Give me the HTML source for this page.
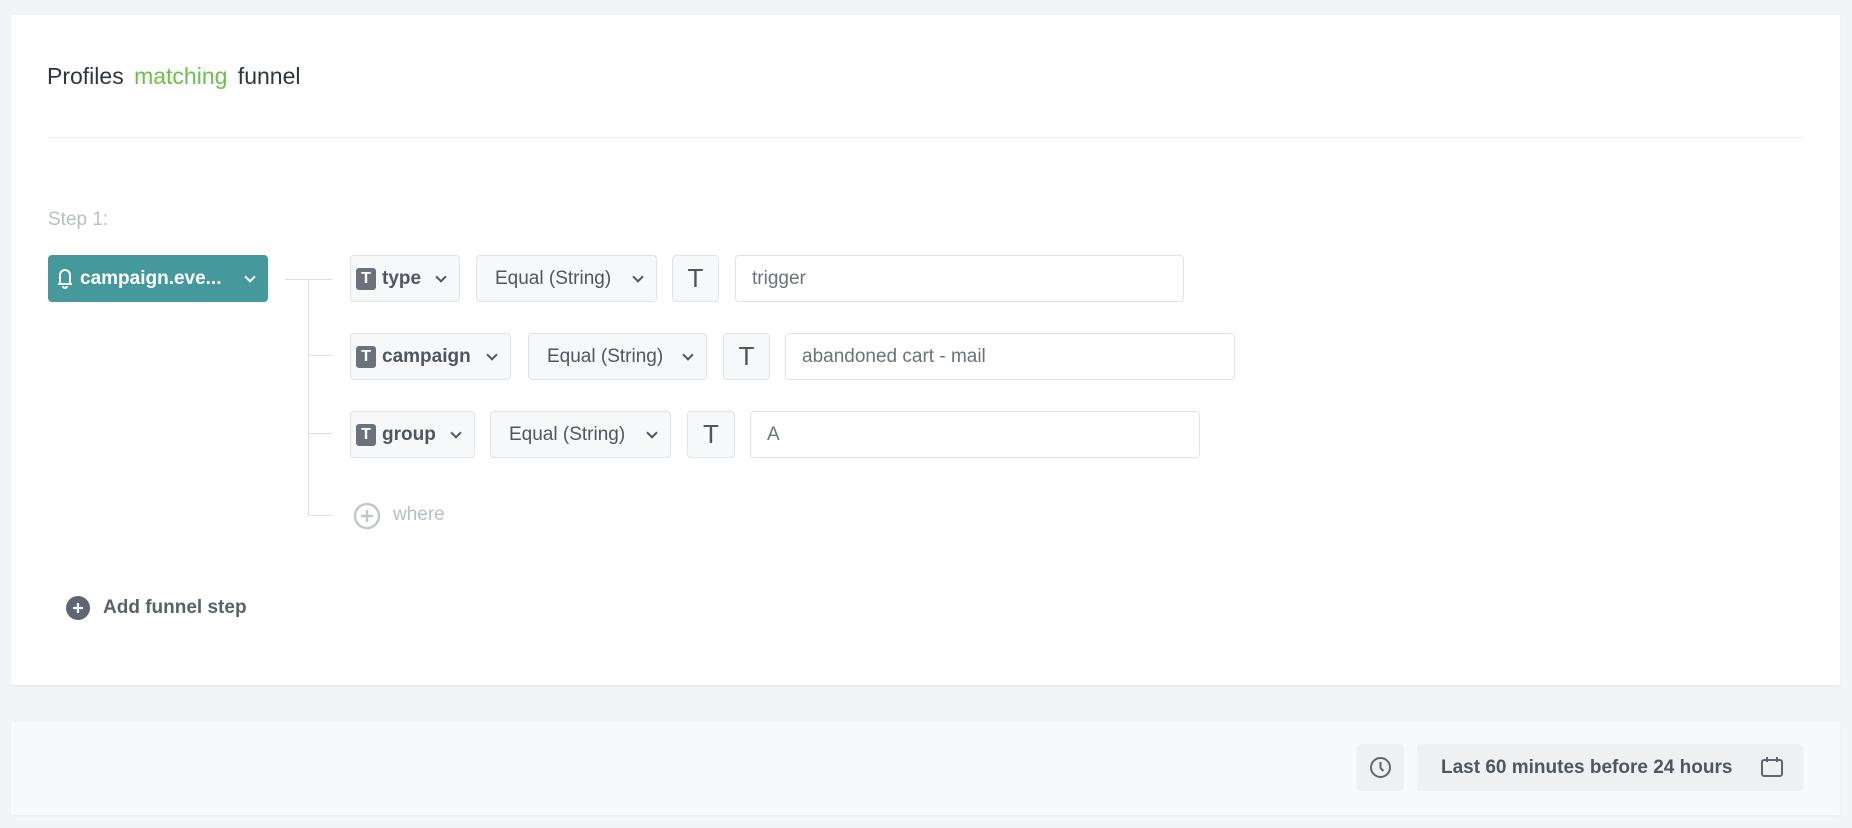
<!DOCTYPE html>
<html><head><meta charset="utf-8"><style>
*{box-sizing:border-box;margin:0;padding:0}
body{width:1852px;height:828px;background:#f3f4f6;font-family:"Liberation Sans",sans-serif;position:relative;overflow:hidden;color:#4a515b}
.abs{position:absolute}
.card{left:11px;top:15px;width:1829px;height:670px;background:#fff;box-shadow:0 1px 2px rgba(0,0,0,.05)}
.chip{position:absolute;height:47px;border:1px solid #dfe2e6;border-radius:4px;background:#f7f8fa;display:flex;align-items:center;font-size:19px;color:#4f5660;font-weight:bold}
.ti{width:20px;height:22px;background:#6b727c;border-radius:3px;margin-left:5px;margin-right:6px;color:#fff;font-size:16px;display:flex;align-items:center;justify-content:center;font-weight:bold}
.chev{width:8px;height:8px;border-right:2px solid #4f5660;border-bottom:2px solid #4f5660;transform:rotate(45deg);margin-top:-6px;position:absolute;right:14px;top:50%}
.tb{position:absolute;height:47px;border:1px solid #dfe2e6;border-radius:4px;background:#f7f8fa;display:flex;align-items:center;justify-content:center;font-size:26px;color:#4f5660}
.inp{position:absolute;height:47px;border:1px solid #dfe2e6;border-radius:4px;background:#fff;font-size:19px;color:#6b727c;padding-left:16px;display:flex;align-items:center}
.ln{position:absolute;background:#dcdfe3}
</style></head><body>
<div class="abs card"></div>
<div class="abs" style="left:47px;top:63px;font-size:23px;color:#2f3540">Profiles <span style="color:#6cc04a;margin:0 4px">matching</span> funnel</div>
<div class="abs" style="left:47px;top:137px;width:1758px;height:1px;background:#eef0f2"></div>
<div class="abs" style="left:48px;top:209px;font-size:19px;color:#b8bec6">Step 1:</div>
<div class="abs" style="left:48px;top:255px;width:220px;height:47px;background:#45999a;border-radius:4px;color:#fff;font-size:19px;font-weight:bold;display:flex;align-items:center">
<svg width="18" height="24" viewBox="0 0 18 24" style="margin-left:8px;margin-right:6px"><path d="M4 17V8a5 5 0 0 1 10 0v9z M2 17h14 M7 19a2 2 0 0 0 4 0" fill="none" stroke="#fff" stroke-width="2"/></svg>campaign.eve...
<span class="chev" style="border-color:#fff"></span></div>
<div class="ln" style="left:285px;top:279px;width:47px;height:1px"></div>
<div class="ln" style="left:308px;top:279px;width:1px;height:236px"></div>
<div class="ln" style="left:308px;top:355px;width:24px;height:1px"></div>
<div class="ln" style="left:308px;top:433px;width:24px;height:1px"></div>
<div class="ln" style="left:308px;top:515px;width:24px;height:1px"></div>

<div class="chip" style="left:350px;top:255px;width:110px"><span class="ti">T</span>type<span class="chev"></span></div>
<div class="chip" style="left:476px;top:255px;width:181px;padding-left:18px;font-weight:normal">Equal (String)<span class="chev"></span></div>
<div class="tb" style="left:672px;top:255px;width:47px">T</div>
<div class="inp" style="left:735px;top:255px;width:449px">trigger</div>

<div class="chip" style="left:350px;top:333px;width:161px"><span class="ti">T</span>campaign<span class="chev"></span></div>
<div class="chip" style="left:528px;top:333px;width:179px;padding-left:18px;font-weight:normal">Equal (String)<span class="chev"></span></div>
<div class="tb" style="left:723px;top:333px;width:47px">T</div>
<div class="inp" style="left:785px;top:333px;width:450px">abandoned cart - mail</div>

<div class="chip" style="left:350px;top:411px;width:125px"><span class="ti">T</span>group<span class="chev"></span></div>
<div class="chip" style="left:490px;top:411px;width:181px;padding-left:18px;font-weight:normal">Equal (String)<span class="chev"></span></div>
<div class="tb" style="left:687px;top:411px;width:48px">T</div>
<div class="inp" style="left:750px;top:411px;width:450px">A</div>

<svg class="abs" style="left:353px;top:502px" width="28" height="28" viewBox="0 0 28 28"><circle cx="14" cy="14" r="12" fill="none" stroke="#c3c8ce" stroke-width="2.5"/><path d="M14 8v12M8 14h12" stroke="#c3c8ce" stroke-width="2.5"/></svg>
<div class="abs" style="left:393px;top:504px;font-size:19px;color:#b8bec6">where</div>

<svg class="abs" style="left:66px;top:596px" width="24" height="24" viewBox="0 0 24 24"><circle cx="12" cy="12" r="12" fill="#5f6670"/><path d="M12 7v10M7 12h10" stroke="#fff" stroke-width="2.2"/></svg>
<div class="abs" style="left:103px;top:597px;font-size:19px;font-weight:bold;color:#5a616b">Add funnel step</div>

<div class="abs" style="left:11px;top:722px;width:1829px;height:93px;background:#f8f9fa;box-shadow:0 1px 2px rgba(0,0,0,.04)"></div>
<div class="abs" style="left:1357px;top:744px;width:47px;height:47px;background:#eff0f2;border-radius:4px"></div>
<svg class="abs" style="left:1369px;top:756px" width="23" height="23" viewBox="0 0 23 23"><circle cx="11.5" cy="11.5" r="9.5" fill="none" stroke="#5f6670" stroke-width="2"/><path d="M11.5 6v6l3 3" fill="none" stroke="#5f6670" stroke-width="2"/></svg>
<div class="abs" style="left:1417px;top:744px;width:386px;height:47px;background:#eff0f2;border-radius:4px;display:flex;align-items:center;font-size:19px;color:#4f5660;font-weight:bold;padding-left:24px">Last 60 minutes before 24 hours</div>
<svg class="abs" style="left:1760px;top:756px" width="24" height="22" viewBox="0 0 24 22"><rect x="2" y="4" width="20" height="16" rx="2" fill="none" stroke="#5f6670" stroke-width="2"/><path d="M7 1v5M17 1v5" stroke="#5f6670" stroke-width="2"/></svg>
</body></html>
